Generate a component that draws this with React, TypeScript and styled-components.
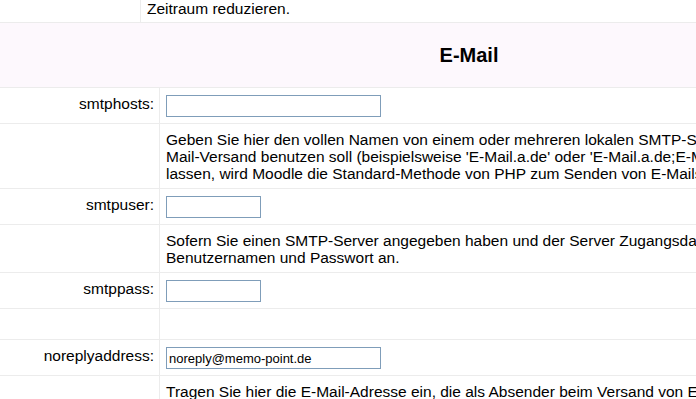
import React from "react";
import styled, { createGlobalStyle } from "styled-components";

const GlobalStyle = createGlobalStyle`
  html, body {
    margin: 0;
    padding: 0;
    background: #ffffff;
    overflow: hidden;
  }
  body {
    font-family: "Liberation Sans", Arial, sans-serif;
    font-size: 15.5px;
    line-height: 17px;
    color: #000000;
  }
`;

const LINE = "#ececec";

const Page = styled.div`
  width: 938px;
  display: flex;
  flex-direction: column;
`;

const Row = styled.div<{ $label: number }>`
  display: grid;
  grid-template-columns: ${(p) => p.$label}px 1fr;
  border-bottom: 1px solid ${LINE};
`;

const LabelCell = styled.div`
  text-align: right;
  padding: 7px 5px 6px 6px;
  border-right: 1px solid ${LINE};
  white-space: nowrap;
`;

const ValueCell = styled.div<{ $top?: number; $bottom?: number }>`
  padding: ${(p) => p.$top ?? 7}px 6px ${(p) => p.$bottom ?? 6}px 6px;
`;

const Header = styled.div`
  height: 64px;
  background: #fdf8fd;
  border-bottom: 1px solid ${LINE};
  display: flex;
  align-items: center;
  justify-content: center;
  font-size: 20px;
  font-weight: bold;
`;

const TextInput = styled.input<{ $w: number }>`
  display: block;
  box-sizing: border-box;
  width: ${(p) => p.$w}px;
  height: 22px;
  margin: 0;
  padding: 0 2px;
  border: 1px solid #7f9db9;
  background: #ffffff;
  font-family: "Liberation Sans", Arial, sans-serif;
  font-size: 13px;
  color: #000000;
  outline: none;
`;

const Description = styled.div`
  white-space: nowrap;
`;

export default function App() {
  return (
    <>
      <GlobalStyle />
      <Page>
        <Row $label={141}>
          <LabelCell style={{ padding: 0 }} />
          <ValueCell $top={0} $bottom={5}>
            Zeitraum reduzieren.
          </ValueCell>
        </Row>
        <Header>E-Mail</Header>
        <Row $label={160}>
          <LabelCell>smtphosts:</LabelCell>
          <ValueCell>
            <TextInput $w={215} type="text" defaultValue="" />
          </ValueCell>
        </Row>
        <Row $label={160}>
          <LabelCell />
          <ValueCell>
            <Description>
              Geben Sie hier den vollen Namen von einem oder mehreren lokalen SMTP-Servern ein, die Moodle für den
              <br />
              Mail-Versand benutzen soll (beispielsweise 'E-Mail.a.de' oder 'E-Mail.a.de;E-Mail.b.de'). Wenn Sie dieses Feld leer
              <br />
              lassen, wird Moodle die Standard-Methode von PHP zum Senden von E-Mails verwenden.
            </Description>
          </ValueCell>
        </Row>
        <Row $label={160}>
          <LabelCell>smtpuser:</LabelCell>
          <ValueCell>
            <TextInput $w={95} type="text" defaultValue="" />
          </ValueCell>
        </Row>
        <Row $label={160}>
          <LabelCell />
          <ValueCell>
            <Description>
              Sofern Sie einen SMTP-Server angegeben haben und der Server Zugangsdaten verlangt, geben Sie hier den
              <br />
              Benutzernamen und Passwort an.
            </Description>
          </ValueCell>
        </Row>
        <Row $label={160}>
          <LabelCell>smtppass:</LabelCell>
          <ValueCell>
            <TextInput $w={95} type="password" defaultValue="" />
          </ValueCell>
        </Row>
        <Row $label={160}>
          <LabelCell>&nbsp;</LabelCell>
          <ValueCell $bottom={5}>&nbsp;</ValueCell>
        </Row>
        <Row $label={160}>
          <LabelCell>noreplyaddress:</LabelCell>
          <ValueCell>
            <TextInput $w={215} type="text" defaultValue="noreply@memo-point.de" />
          </ValueCell>
        </Row>
        <Row $label={160}>
          <LabelCell />
          <ValueCell>
            <Description>
              Tragen Sie hier die E-Mail-Adresse ein, die als Absender beim Versand von E-Mails verwendet werden soll,
              <br />
              wenn der tatsächliche Absender nicht angezeigt werden darf.
            </Description>
          </ValueCell>
        </Row>
      </Page>
    </>
  );
}
